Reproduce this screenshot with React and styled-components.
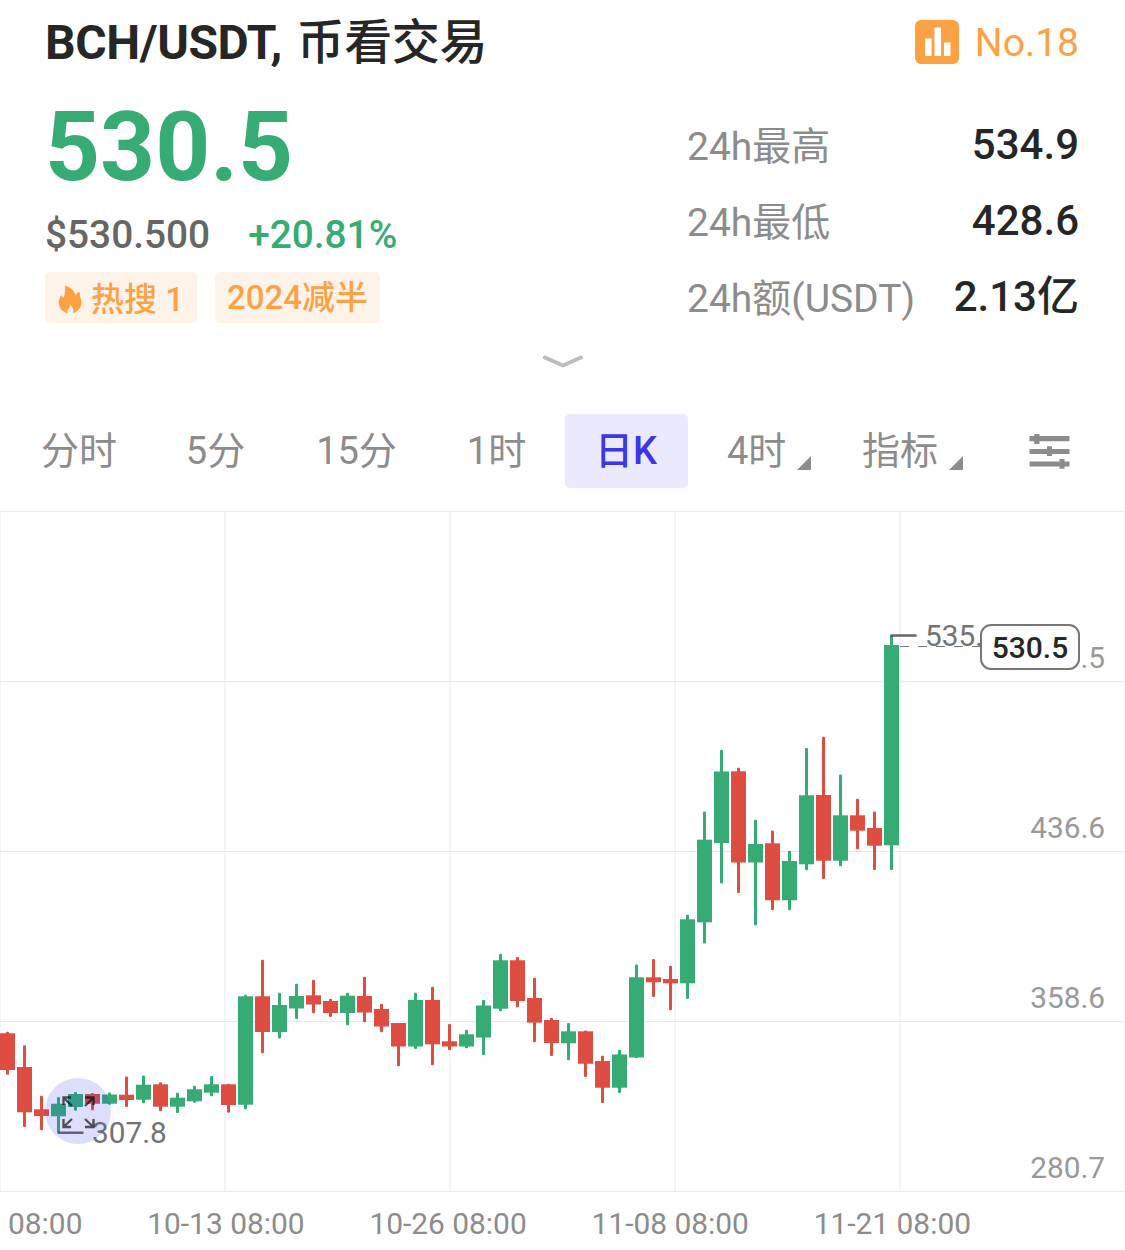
import React from 'react'
import styled, { createGlobalStyle, css } from 'styled-components'

const UP = '#36ab73';
const DOWN = '#dd4d41';
const ORANGE = '#fda244';

// [direction, high, body top, body bottom, low] in chart pixels
const candles = [
  [0, 1031, 1033.3, 1070, 1075.5], [0, 1044.5, 1067, 1112.3, 1127.7], [0, 1095, 1109.3, 1116, 1131],
  [1, 1096.3, 1103.7, 1116.3, 1133], [1, 1091.3, 1094, 1107, 1111.5], [0, 1092.3, 1094, 1103.7, 1111],
  [1, 1091.7, 1094.5, 1103.7, 1105.5], [0, 1075.7, 1094.7, 1100, 1107.7], [1, 1074.7, 1084.7, 1099.7, 1104],
  [0, 1081.5, 1084.3, 1106.7, 1112], [1, 1092, 1097.7, 1106.7, 1113.7], [1, 1085, 1089.3, 1101.3, 1103.5],
  [1, 1075.3, 1084.3, 1092.7, 1097], [0, 1083, 1084.3, 1105, 1113.5], [1, 994, 996.3, 1104.7, 1110],
  [0, 959, 996.3, 1032, 1054], [1, 992, 1005, 1032, 1039.3], [1, 983, 996, 1008.5, 1019.7],
  [0, 979, 995.3, 1004.5, 1014], [0, 998, 1001, 1013, 1017.7], [1, 992, 995.7, 1013, 1026],
  [0, 976, 996, 1012.5, 1023], [0, 1003, 1009, 1026.5, 1033], [0, 1022.3, 1023, 1046.5, 1067],
  [1, 992, 1000, 1046.5, 1049.7], [0, 986, 1000, 1044.3, 1066], [0, 1023.3, 1041.3, 1046.5, 1051],
  [1, 1029, 1034.3, 1046.5, 1049], [1, 999, 1005.5, 1037.5, 1055.7], [1, 953, 960.3, 1008.7, 1012],
  [0, 956.3, 960.3, 1001, 1008], [0, 977, 998, 1022.7, 1043], [0, 1017, 1020, 1043, 1056.7],
  [1, 1022.3, 1031.3, 1043.3, 1061], [0, 1029.7, 1031.3, 1063.7, 1077.7], [0, 1055, 1061, 1087.7, 1103.7],
  [1, 1049, 1054.5, 1087.7, 1093.7], [1, 963.7, 977.3, 1057.5, 1058.7], [0, 958.3, 977.3, 982.3, 997.7],
  [0, 965, 979, 983.3, 1011], [1, 914, 919.3, 983.3, 999.7], [1, 810.7, 839.7, 922.3, 944.3],
  [1, 749, 771.5, 843, 884.3], [0, 767, 771.3, 862.5, 893.7], [1, 819, 844, 862.5, 926],
  [0, 829.7, 843.3, 900.3, 911], [1, 850, 861, 900.3, 911], [1, 747.3, 795.3, 864.3, 871],
  [0, 736, 795, 860.7, 879.7], [1, 773.7, 815.3, 860.7, 867], [0, 798, 815.3, 830.7, 850],
  [0, 810.7, 828, 845.7, 870.7], [1, 635, 645, 845.3, 870.7],
];

const stats = [
  { label: '24h最高', value: '534.9' },
  { label: '24h最低', value: '428.6' },
  { label: '24h额(USDT)', value: '2.13亿' },
];

const periods = [
  { label: '分时', width: 158 },
  { label: '5分', width: 115 },
  { label: '15分', width: 167 },
  { label: '1时', width: 113 },
  { label: '日K', width: 146, active: true },
];

const prices = ['.5', '436.6', '358.6', '280.7'];
const times = ['08:00', '10-13 08:00', '10-26 08:00', '11-08 08:00', '11-21 08:00'];

const App = () => (
  <Page>
    <GlobalStyle/>
    <TitleBar>
      <Pair><Symbol>BCH/USDT,</Symbol> 币看交易</Pair>
      <Rank><RankIcon/><RankText>No.18</RankText></Rank>
    </TitleBar>
    <Summary>
      <PriceColumn>
        <Price>530.5</Price>
        <SubPrice>
          <Dollar>$530.500</Dollar>
          <Change>+20.81%</Change>
        </SubPrice>
        <Tags>
          <HotTag><FlameIcon/>热搜 1</HotTag>
          <Tag>2024减半</Tag>
        </Tags>
      </PriceColumn>
      <Stats>
        {stats.map(s => (
          <StatRow key={s.label}>
            <StatLabel>{s.label}</StatLabel>
            <StatValue>{s.value}</StatValue>
          </StatRow>
        ))}
      </Stats>
    </Summary>
    <Expand>
      <svg width="40" height="14" viewBox="0 0 40 14">
        <path d="M2 2.5 L20 10.5 L38 2.5" fill="none" stroke="#bdbdbd" strokeWidth="4" strokeLinecap="round" strokeLinejoin="round"/>
      </svg>
    </Expand>
    <Toolbar>
      {periods.map(p => (
        <PeriodCell key={p.label} $width={p.width}>
          <Period $active={p.active}>{p.label}</Period>
        </PeriodCell>
      ))}
      <Dropdowns>
        <Dropdown $width={135}>4时<Corner/></Dropdown>
        <Dropdown $width={167}>指标<Corner/></Dropdown>
        <SettingsIcon/>
      </Dropdowns>
    </Toolbar>
    <Chart>
      <CandleChart/>
      <PriceAxis>
        {prices.map(p => <AxisPrice key={p}>{p}</AxisPrice>)}
      </PriceAxis>
      <HighLabel>535.</HighLabel>
      <LowLabel>307.8</LowLabel>
      <CurrentPrice>530.5</CurrentPrice>
      <FullScreen>
        <svg width="66" height="66" viewBox="0 0 66 66">
          <g fill="none" stroke="#000" strokeOpacity="0.65" strokeWidth="2.4">
            <path d="M18.5 27 V19.5 H26 M18.5 19.5 L27 28"/>
            <path d="M40 19.5 H48.5 V27 M48.5 19.5 L40 28"/>
            <path d="M18.5 41 V49 H26 M18.5 49 L27 41"/>
            <path d="M40 49 H48.5 V41 M48.5 49 L40 41"/>
          </g>
        </svg>
      </FullScreen>
    </Chart>
    <TimeAxis>
      {times.map(t => <Time key={t}>{t}</Time>)}
    </TimeAxis>
  </Page>
);

const RankIcon = () => (
  <svg width="44" height="44" viewBox="0 0 44 44">
    <rect width="44" height="44" rx="6" fill={ORANGE}/>
    <path d="M10 18.5h6.5v17.5h-6.5z M19.5 7.5h6.5v28.5h-6.5z M29 22.5h6.5v13.5h-6.5z" fill="#fff"/>
  </svg>
);

const FlameIcon = () => (
  <svg width="24" height="29" viewBox="0 0 24 29">
    <path
      d="M7.2 0.5 C12.5 2.5 17 6 17.4 10.5 C17.6 8.8 19 7.6 22.2 6.9 C20.8 10.5 23.6 13 23.4 17.8 C23.2 23 19.5 27 14.8 28.2 C16.2 25 14.8 22.5 12.2 19.8 C12.1 21.4 11.6 22.4 10.7 23.4 C9.3 25 8.8 26.4 9.8 28.3 C4.5 27 0.8 23 0.8 17.8 C0.8 14.5 2 12 3.4 10 C3.9 11.5 4.5 12.2 5.6 12.8 C7.2 9 6.9 4.5 7.2 0.5 Z"
      fill={ORANGE}
    />
  </svg>
);

const SettingsIcon = () => (
  <svg width="41" height="36" viewBox="0 0 41 36">
    <path d="M0.5 3h40v5.3h-40z M5.2 1h5.3v10h-5.3z M0.5 16h40v5h-40z M18 13.3h5v9.8h-5z M0.5 28.4h40v5.2h-40z M30.5 26h5v9.8h-5z" fill="#8c8c8c"/>
  </svg>
);

const Corner = () => (
  <svg width="14" height="14" viewBox="0 0 14 14">
    <path d="M14 0v14H0z" fill="#8c8c8c"/>
  </svg>
);

const CandleChart = () => (
  <svg width="1125" height="683" viewBox="0 510 1125 683">
    {[0, 224, 449, 674, 899, 1124].map(x => <rect key={x} x={x} y="512" width={x % 1124 ? 2 : 1} height="680" fill="#f4f4f6"/>)}
    {[511, 681, 851, 1021, 1191].map(y => <rect key={y} x="0" y={y} width="1125" height="1" fill="#e9e9ec"/>)}
    {candles.map(([up, high, top, bottom, low], i) => (
      <g key={i} fill={up ? UP : DOWN}>
        <rect x={17 * i + 6} y={high + 0.8} width="3" height={low - high - 1.6} rx="1"/>
        <rect x={17 * i} y={top} width="15" height={bottom - top}/>
      </g>
    ))}
    <path d="M891.5 635.5 H915.5 M58.5 1132.7 H82.5" stroke="#000" strokeOpacity="0.6" strokeWidth="2.6" strokeLinecap="round"/>
    <path d="M900 646.5 H980" stroke="#777" strokeWidth="1" strokeDasharray="9 9"/>
  </svg>
);

const GlobalStyle = createGlobalStyle`
  body {
    margin: 0;
    background: #fff;
    font-family: Roboto, 'Noto Sans CJK SC', sans-serif;
  }

  svg {
    display: block;
    flex-shrink: 0;
  }
`;

const Page = styled.div`
  width: 1125px;
  height: 1250px;
  overflow: hidden;
  color: #262626;
`;

const TitleBar = styled.div`
  display: flex;
  align-items: center;
  justify-content: space-between;
  height: 84px;
  padding: 0 46px 0 45px;
  box-sizing: border-box;
`;

const Pair = styled.div`
  padding-top: 2px;
  font-size: 48px;
  line-height: 60px;
  font-weight: 500;
  letter-spacing: -0.3px;
  white-space: nowrap;
`;

const Symbol = styled.span`
  margin-right: 3px;
  font-weight: 700;
  letter-spacing: -0.4px;
`;

const Rank = styled.div`
  display: flex;
  align-items: center;
  gap: 16px;
  font-size: 39px;
  line-height: 46px;
  color: ${ORANGE};
`;

const RankText = styled.div`
  padding-top: 2px;
`;

const Summary = styled.div`
  display: flex;
  justify-content: space-between;
  height: 257px;
  padding: 0 46px 0 45px;
`;

const PriceColumn = styled.div`
  display: flex;
  flex-direction: column;
`;

const Price = styled.div`
  font-size: 96px;
  line-height: 112px;
  height: 122px;
  padding-top: 7px;
  box-sizing: border-box;
  font-weight: 700;
  color: ${UP};
`;

const SubPrice = styled.div`
  display: flex;
  gap: 38px;
  height: 66px;
  font-size: 38.8px;
  line-height: 58px;
  font-weight: 500;
`;

const Dollar = styled.div`
  color: #666;
`;

const Change = styled.div`
  color: ${UP};
`;

const Tags = styled.div`
  display: flex;
  gap: 18px;
`;

const Tag = styled.div`
  display: flex;
  align-items: center;
  height: 51px;
  padding: 0 12px;
  box-sizing: border-box;
  border-radius: 5px;
  background: #fef3e8;
  font-size: 33px;
  line-height: 51px;
  font-weight: 500;
  color: ${ORANGE};
`;

const HotTag = styled(Tag)`
  gap: 9px;
  padding: 3px 13px 0;
`;

const Stats = styled.div`
  width: 392px;
  padding-top: 23px;
`;

const StatRow = styled.div`
  display: flex;
  justify-content: space-between;
  height: 76px;
  line-height: 76px;
`;

const StatLabel = styled.div`
  padding-top: 2px;
  font-size: 39px;
  color: #8c8c8c;
`;

const StatValue = styled.div`
  font-size: 42px;
  font-weight: 500;
`;

const Expand = styled.div`
  display: flex;
  justify-content: center;
  height: 72px;
  padding-top: 14px;
  box-sizing: border-box;
`;

const Toolbar = styled.div`
  display: flex;
  align-items: center;
  height: 76px;
  font-size: 38px;
  line-height: 75px;
  color: #8c8c8c;
`;

const PeriodCell = styled.div`
  display: flex;
  justify-content: center;
  width: ${p => p.$width}px;
`;

const Period = styled.div`
  ${p => p.$active && css`
    width: 123px;
    height: 74px;
    border-radius: 5px;
    background: #ebe9fd;
    color: #3b36e8;
    font-weight: 500;
    text-align: center;
  `}
`;

const Dropdowns = styled.div`
  display: flex;
  align-items: center;
  margin-left: 28px;
`;

const Dropdown = styled.div`
  display: flex;
  align-items: center;
  gap: 11px;
  width: ${p => p.$width}px;

  svg {
    margin-top: 23px;
  }
`;

const Chart = styled.div`
  position: relative;
  height: 683px;
  margin-top: 21px;
`;

const PriceAxis = styled.div`
  position: absolute;
  top: 2px;
  right: 20px;
`;

const AxisPrice = styled.div`
  display: flex;
  align-items: flex-end;
  justify-content: flex-end;
  height: 170px;
  padding-bottom: 7px;
  box-sizing: border-box;
  font-size: 29.8px;
  line-height: 34px;
  color: #999;
`;

const MarkLabel = styled.div`
  position: absolute;
  font-size: 29.8px;
  line-height: 34px;
  color: #737373;
`;

const HighLabel = styled(MarkLabel)`
  left: 925px;
  top: 109px;
`;

const LowLabel = styled(MarkLabel)`
  left: 92px;
  top: 606px;
`;

const CurrentPrice = styled.div`
  position: absolute;
  left: 980px;
  top: 114px;
  width: 100px;
  height: 46px;
  box-sizing: border-box;
  border: 2px solid #777;
  border-radius: 11px;
  background: #fff;
  font-size: 30px;
  line-height: 43px;
  font-weight: 500;
  text-align: center;
`;

const FullScreen = styled.div`
  position: absolute;
  left: 45px;
  top: 568px;
  width: 66px;
  height: 66px;
  border-radius: 50%;
  background: rgba(59, 70, 225, 0.18);
`;

const TimeAxis = styled.div`
  display: flex;
  justify-content: space-between;
  padding: 13px 154px 0 8px;
  font-size: 29.9px;
  line-height: 36px;
  color: #8c8c8c;
`;

const Time = styled.div`
  white-space: nowrap;
`;

export default App
